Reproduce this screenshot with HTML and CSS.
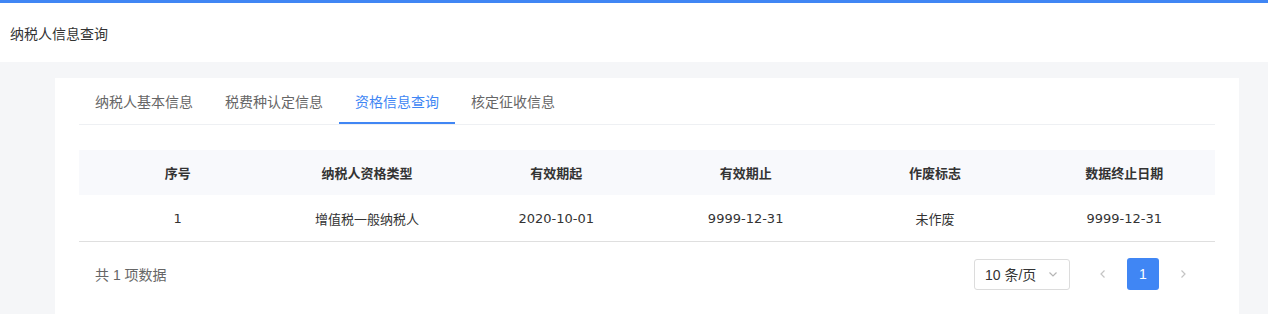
FILE: index.html
```html
<!DOCTYPE html>
<html lang="zh-CN">
<head>
    <meta charset="UTF-8">
    <title>纳税人信息查询</title>
    <link rel="stylesheet" href="styles.css">
</head>
<body>
    <div class="page-header">
        <h1>纳税人信息查询</h1>
    </div>
    <div class="main">
        <div class="card">
            <div class="tabs">
                <div class="tab">纳税人基本信息</div>
                <div class="tab">税费种认定信息</div>
                <div class="tab active">资格信息查询</div>
                <div class="tab">核定征收信息</div>
            </div>
            <table class="data-table">
                <thead>
                    <tr>
                        <th>序号</th>
                        <th>纳税人资格类型</th>
                        <th>有效期起</th>
                        <th>有效期止</th>
                        <th>作废标志</th>
                        <th>数据终止日期</th>
                    </tr>
                </thead>
                <tbody>
                    <tr>
                        <td>1</td>
                        <td>增值税一般纳税人</td>
                        <td>2020-10-01</td>
                        <td>9999-12-31</td>
                        <td>未作废</td>
                        <td>9999-12-31</td>
                    </tr>
                </tbody>
            </table>
            <div class="table-footer">
                <div class="total">共 1 项数据</div>
                <div class="pager">
                    <div class="page-size">
                        <span>10 条/页</span>
                        <svg width="12" height="12" viewBox="0 0 12 12"><path d="M2.5 4.5 L6 8 L9.5 4.5" fill="none" stroke="#b5b5b5" stroke-width="1.2"/></svg>
                    </div>
                    <div class="page-btn arrow">
                        <svg width="10" height="12" viewBox="0 0 10 12"><path d="M6.5 2.5 L3 6 L6.5 9.5" fill="none" stroke="#c4c4c4" stroke-width="1.2"/></svg>
                    </div>
                    <div class="page-btn current">1</div>
                    <div class="page-btn arrow">
                        <svg width="10" height="12" viewBox="0 0 10 12"><path d="M3.5 2.5 L7 6 L3.5 9.5" fill="none" stroke="#c4c4c4" stroke-width="1.2"/></svg>
                    </div>
                </div>
            </div>
        </div>
    </div>
</body>
</html>
```

FILE: styles.css
```css
body {
    margin: 0;
    font-family: "Liberation Sans", "Noto Sans CJK SC", sans-serif;
    background-color: #f5f6f8;
    color: #333;
    border-top: 3px solid #4086f4;
}
.page-header {
    background-color: #fff;
    height: 59px;
    display: flex;
    align-items: center;
    padding-left: 10px;
}
.page-header h1 {
    margin: 0;
    font-size: 14px;
    font-weight: normal;
    color: #333;
}
.main {
    padding: 16px 29px 0 55px;
}
.card {
    background-color: #fff;
    padding: 0 24px 24px;
}
.tabs {
    display: flex;
    border-bottom: 1px solid #eef0f3;
    height: 46px;
}
.tab {
    position: relative;
    padding: 0 16px;
    font-size: 14px;
    color: #666;
    display: flex;
    align-items: center;
}
.tab.active {
    color: #4086f4;
}
.tab.active::after {
    content: "";
    position: absolute;
    left: 0;
    right: 0;
    bottom: 0;
    height: 2px;
    background-color: #4086f4;
}
.data-table {
    width: 100%;
    margin-top: 25px;
    border-collapse: collapse;
    table-layout: fixed;
    font-size: 13px;
}
.data-table th,
.data-table td {
    text-align: center;
    padding: 0 0 0 8px;
}
.data-table th {
    height: 45px;
    background-color: #f8f9fc;
    font-weight: bold;
    color: #333;
}
.data-table td {
    height: 46px;
    border-bottom: 1px solid #dfdfdf;
    color: #333;
    font-family: "DejaVu Sans", "Noto Sans CJK SC", sans-serif;
}
.table-footer {
    display: flex;
    justify-content: space-between;
    align-items: center;
    padding: 16px 16px 0;
}
.total {
    font-size: 14px;
    color: #666;
}
.pager {
    display: flex;
    align-items: center;
}
.page-size {
    width: 96px;
    height: 31px;
    box-sizing: border-box;
    border: 1px solid #dcdcdc;
    border-radius: 3px;
    display: flex;
    align-items: center;
    justify-content: space-between;
    padding: 0 10px;
    font-size: 14px;
    color: #333;
    margin-right: 17px;
}
.page-btn {
    width: 32px;
    height: 32px;
    display: flex;
    align-items: center;
    justify-content: center;
    margin-right: 8px;
    border-radius: 3px;
    font-size: 14px;
}
.page-btn:last-child {
    margin-right: 0;
}
.page-btn.current {
    background-color: #4086f4;
    color: #fff;
}
```
